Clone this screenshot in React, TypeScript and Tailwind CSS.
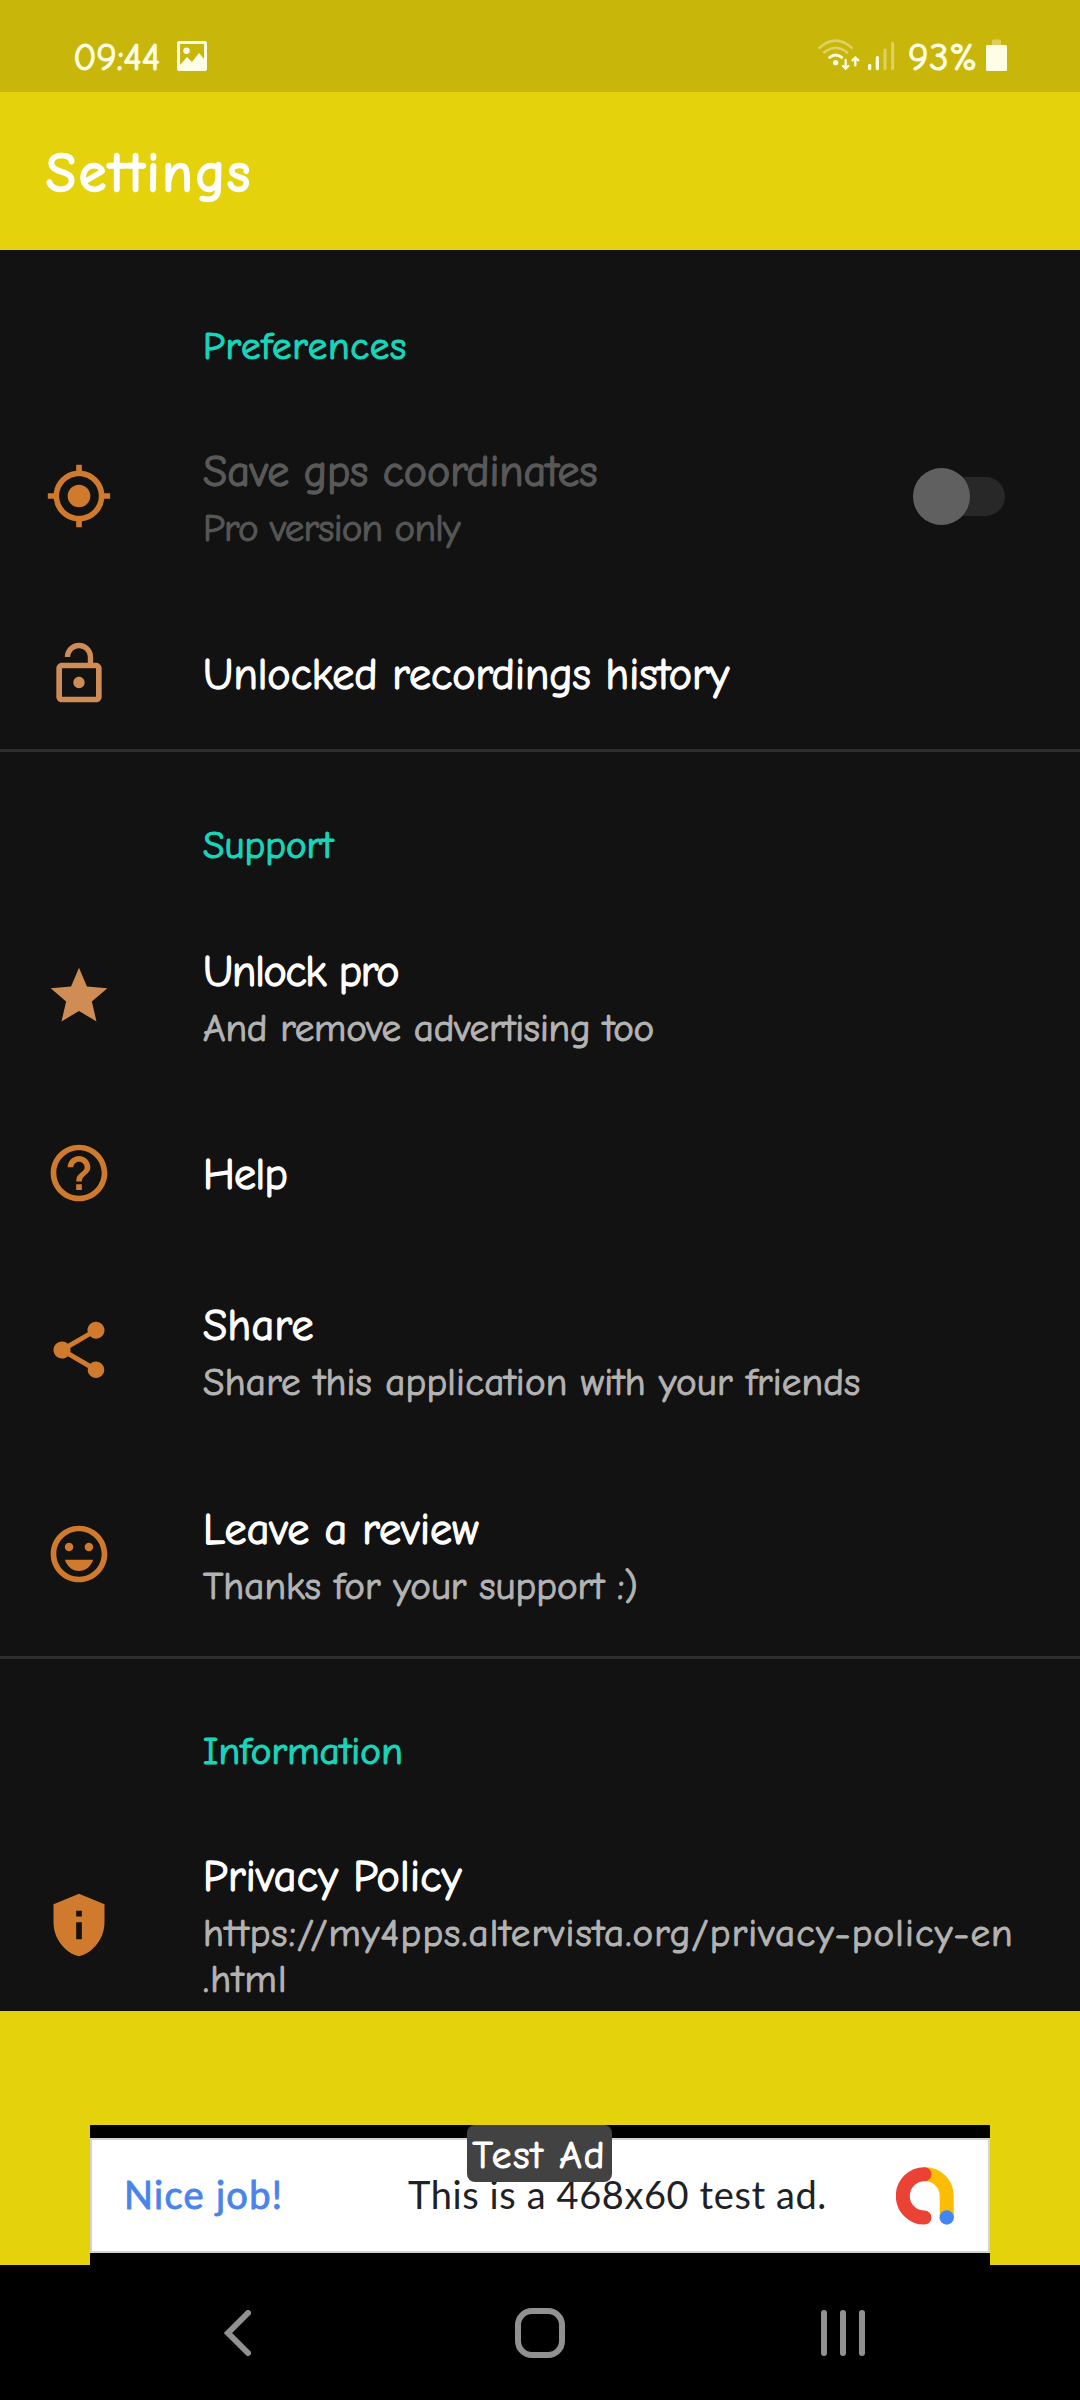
import type { ReactNode } from "react";

const ORANGE = "text-[#d07a2d]";
const TAN = "text-[#cf8d55]";

function Icon({ className, children }: { className: string; children: ReactNode }) {
  return (
    <svg viewBox="0 0 24 24" fill="currentColor" className={`size-[68px] shrink-0 ${className}`}>
      {children}
    </svg>
  );
}

function Header({ children, className }: { children: ReactNode; className: string }) {
  return (
    <h2
      className={`flex shrink-0 items-center pl-[203px] text-[39px] leading-[46px] text-[#17d5bb] [-webkit-text-stroke:1.2px_#17d5bb] ${className}`}
    >
      {children}
    </h2>
  );
}

function Title({ children, className = "text-white" }: { children: ReactNode; className?: string }) {
  return (
    <div className={`text-[44px] leading-[56px] whitespace-nowrap [-webkit-text-stroke:1.3px_currentColor] ${className}`}>
      {children}
    </div>
  );
}

function Summary({ children, className = "text-[#b3b3b3]" }: { children: ReactNode; className?: string }) {
  return (
    <div className={`mt-[6px] text-[39px] leading-[46px] whitespace-nowrap [-webkit-text-stroke:1px_currentColor] ${className}`}>
      {children}
    </div>
  );
}

function Row({ icon, children, className, end }: { icon: ReactNode; children: ReactNode; className: string; end?: ReactNode }) {
  return (
    <div className={`flex shrink-0 items-center pr-[76px] pl-[45px] ${className}`}>
      {icon}
      <div className="ml-[90px] flex-1 pt-[3px]">{children}</div>
      {end}
    </div>
  );
}

function Divider() {
  return <div className="h-[3px] shrink-0 bg-[#2e2e2e]" />;
}

function Toggle() {
  return (
    <div className="mr-[-1px] flex h-[58px] w-[92px] items-center">
      <div className="z-10 size-[57px] shrink-0 rounded-full bg-[#606060]" />
      <div className="-ml-[50px] h-[39px] w-[85px] rounded-full bg-[#282828]" />
    </div>
  );
}

function StatusBar() {
  return (
    <div className="flex h-[92px] shrink-0 items-start bg-[#c9b60a] text-[#fffde6]">
      <span className="mt-[35px] ml-[73px] w-[104px] text-[39px] leading-[46px] tracking-[-0.4px] [-webkit-text-stroke:1px_#fffde6]">
        09:44
      </span>
      <svg viewBox="0 0 30 30" className="mt-[41px] size-[30px]" fill="currentColor">
        <path
          fillRule="evenodd"
          d="M2 0h26q2 0 2 2v26q0 2-2 2H2q-2 0-2-2V2Q0 0 2 0ZM3 3v21l7-8 5 5 7-9 5 6V3ZM9.5 6.500a3.200 3.200 0 1 1 0 6.400 3.200 3.200 0 0 1 0-6.400Z"
        />
      </svg>
      <svg viewBox="170 111 240 105" className="mt-[37px] ml-[610px] h-[35px] w-[80px]" fill="none" strokeLinecap="round">
        <g stroke="#dfd162" strokeWidth="8">
          <path d="M178 143Q226 101 274 143M192 157Q226 130 260 157" />
          <path d="M374 150V206M397 130V206" strokeWidth="9" />
        </g>
        <g stroke="#fffde6" strokeWidth="9">
          <path d="M208 172Q226 158 244 172" />
          <path d="M328 196V206M351 173V206" strokeWidth="10" />
          <path d="M256 180V204M248 198L256 206L264 198M285 196V174M276 181L285 173L294 181" strokeWidth="7" />
        </g>
        <circle cx="226" cy="188" r="8" fill="#fffde6" />
      </svg>
      <span className="mt-[35px] ml-[11px] w-[78px] text-[39px] leading-[46px] tracking-[0.4px] [-webkit-text-stroke:1px_#fffde6]">93%</span>
      <svg viewBox="0 0 21 32" className="mt-[39px] h-[32px] w-[21px]">
        <path d="M6 6V2q0-1.500 1.500-1.500h6Q15 .5 15 2v4Z" fill="#dccf5c" />
        <rect y="6" width="21" height="26" rx="1.500" fill="#fffde6" />
      </svg>
    </div>
  );
}

function AdBanner() {
  return (
    <div className="flex h-[254px] shrink-0 flex-col items-center justify-end bg-[#e4d20c]">
      <div className="relative h-[140px] w-[900px] bg-black pt-[13px]">
        <div className="flex h-[115px] items-center border-2 border-[#d3d3d3] bg-white pl-[32px] font-[Lato] text-[38px] leading-[46px] whitespace-nowrap">
          <span className="w-[284px] pb-[3px] tracking-[1.3px] text-[#4a84ea] [-webkit-text-stroke:0.9px_#4a84ea]">Nice job!</span>
          <span className="w-[488px] pb-[3px] tracking-[0.6px] text-[#202124]">This is a 468x60 test ad.</span>
          <svg viewBox="0 0 58 58" className="size-[58px]" fill="none" strokeLinecap="round" strokeWidth="14">
            <path d="M29 7.200A21.600 21.600 0 0 1 50.700 29V48" stroke="#fbbc04" />
            <path d="M28.500 7.200A21.700 21.700 0 0 0 28.500 50.600" stroke="#ea4335" />
            <circle cx="50.700" cy="50.500" r="7.200" fill="#4285f4" />
          </svg>
        </div>
        <div className="absolute top-0 left-[377px] h-[57px] w-[145px] rounded-[8px] bg-[#424242] pt-[8px] text-center text-[39px] leading-[46px] tracking-[1.9px] whitespace-nowrap text-white [-webkit-text-stroke:1.2px_#fff]">
          Test Ad
        </div>
      </div>
    </div>
  );
}

function NavBar() {
  return (
    <div className="flex h-[135px] shrink-0 items-center bg-black text-[#919191]">
      <svg viewBox="0 0 28 46" className="ml-[223px] h-[46px] w-[28px]" fill="none" stroke="currentColor" strokeWidth="6" strokeLinecap="round">
        <path d="M25 3L5 23L25 43" />
      </svg>
      <div className="ml-[264px] size-[50px] rounded-[17px] border-[6px] border-[#919191]" />
      <div className="ml-[256px] flex gap-[13px]">
        <div className="h-[46px] w-[6px] rounded-full bg-[#919191]" />
        <div className="h-[46px] w-[6px] rounded-full bg-[#919191]" />
        <div className="h-[46px] w-[6px] rounded-full bg-[#919191]" />
      </div>
    </div>
  );
}

export default function App() {
  return (
    <div className="flex h-[2400px] w-[1080px] flex-col overflow-hidden bg-[#121212] font-['Comic_Neue','Comic_Sans_MS',cursive] [font-variant-ligatures:none]">
      <StatusBar />
      <header className="flex h-[158px] shrink-0 items-center bg-[#e4d20c] pt-[6px] pl-[46px] text-[54px] leading-[64px] font-medium tracking-[3.3px] text-white [-webkit-text-stroke:2.4px_#fff]">
        Settings
      </header>

      <main className="flex h-[1761px] shrink-0 flex-col overflow-hidden">
        <Header className="h-[144px] pt-[50px] tracking-[0.7px]">Preferences</Header>
        <Row
          className="h-[204px]"
          icon={
            <Icon className={ORANGE}>
              <path d="M12 8c-2.210 0-4 1.790-4 4s1.790 4 4 4 4-1.790 4-4-1.790-4-4-4zm8.940 3A8.994 8.994 0 0 0 13 3.060V1h-2v2.060A8.994 8.994 0 0 0 3.060 11H1v2h2.060A8.994 8.994 0 0 0 11 20.940V23h2v-2.060A8.994 8.994 0 0 0 20.940 13H23v-2h-2.060zM12 19c-3.870 0-7-3.130-7-7s3.130-7 7-7 7 3.130 7 7-3.130 7-7 7z" />
            </Icon>
          }
          end={<Toggle />}
        >
          <Title className="tracking-[-0.1px] text-[#595959]">Save gps coordinates</Title>
          <Summary className="tracking-[-0.8px] text-[#565656]">Pro version only</Summary>
        </Row>
        <Row
          className="h-[151px]"
          icon={
            <Icon className={TAN}>
              <path d="M12 17c1.100 0 2-.9 2-2s-.9-2-2-2-2 .9-2 2 .9 2 2 2zm6-9h-1V6c0-2.760-2.240-5-5-5S7 3.240 7 6h1.900c0-1.710 1.390-3.100 3.100-3.100s3.100 1.390 3.100 3.100v2H6c-1.100 0-2 .9-2 2v10c0 1.100.9 2 2 2h12c1.100 0 2-.9 2-2V10c0-1.100-.9-2-2-2zm0 12H6V10h12v10z" />
            </Icon>
          }
        >
          <Title>Unlocked recordings history</Title>
        </Row>
        <Divider />

        <Header className="h-[142px] pt-[46px]">Support</Header>
        <Row
          className="h-[204px]"
          icon={
            <Icon className={TAN}>
              <path d="M12 17.270 18.180 21l-1.640-7.030L22 9.240l-7.190-.61L12 2 9.190 8.630 2 9.240l5.460 4.730L5.820 21z" />
            </Icon>
          }
        >
          <Title className="tracking-[-1.3px] text-white">Unlock pro</Title>
          <Summary className="tracking-[-0.18px] text-[#b3b3b3]">And remove advertising too</Summary>
        </Row>
        <Row
          className="h-[150px]"
          icon={
            <Icon className={ORANGE}>
              <path d="M11 18h2v-2h-2v2zm1-16C6.480 2 2 6.480 2 12s4.480 10 10 10 10-4.480 10-10S17.520 2 12 2zm0 18c-4.410 0-8-3.590-8-8s3.590-8 8-8 8 3.590 8 8-3.590 8-8 8zm0-14c-2.210 0-4 1.790-4 4h2c0-1.100.9-2 2-2s2 .9 2 2c0 2-3 1.750-3 5h2c0-2.250 3-2.500 3-5 0-2.210-1.790-4-4-4z" />
            </Icon>
          }
        >
          <Title className="tracking-[-0.7px] text-white">Help</Title>
        </Row>
        <Row
          className="h-[204px]"
          icon={
            <Icon className={ORANGE}>
              <path d="M18 16.080c-.76 0-1.440.3-1.960.77L8.910 12.700c.05-.23.09-.46.09-.7s-.04-.47-.09-.7l7.050-4.110c.54.5 1.250.81 2.040.81 1.660 0 3-1.340 3-3s-1.340-3-3-3-3 1.340-3 3c0 .24.04.47.09.7L8.040 9.810C7.500 9.310 6.790 9 6 9c-1.660 0-3 1.340-3 3s1.340 3 3 3c.79 0 1.500-.31 2.040-.81l7.120 4.160c-.05.21-.08.43-.08.65 0 1.610 1.310 2.920 2.920 2.920s2.920-1.310 2.920-2.920-1.310-2.920-2.920-2.920z" />
            </Icon>
          }
        >
          <Title className="tracking-[0.3px] text-white">Share</Title>
          <Summary className="tracking-[0.2px] text-[#b3b3b3]">Share this application with your friends</Summary>
        </Row>
        <Row
          className="h-[204px]"
          icon={
            <Icon className={ORANGE}>
              <path d="M12 2C6.480 2 2 6.480 2 12s4.480 10 10 10 10-4.480 10-10S17.520 2 12 2zm0 18c-4.410 0-8-3.590-8-8s3.590-8 8-8 8 3.590 8 8-3.590 8-8 8zm0-2c2.280 0 4.220-1.660 5-4H7c.78 2.340 2.720 4 5 4z" />
              <circle cx="8.500" cy="9.500" r="1.500" />
              <circle cx="15.500" cy="9.500" r="1.500" />
            </Icon>
          }
        >
          <Title className="tracking-[0.2px] text-white">Leave a review</Title>
          <Summary>Thanks for your support :)</Summary>
        </Row>
        <Divider />

        <Header className="h-[141px] pt-[45px] tracking-[0.2px]">Information</Header>
        <Row
          className="h-[249px]"
          icon={
            <Icon className={ORANGE}>
              <path
                fillRule="evenodd"
                d="M12 1 3 4.700V11c0 5.550 3.840 10.740 9 12 5.160-1.260 9-6.450 9-12V4.700L12 1zM11 7h2v2h-2V7zM11 11h2v6h-2v-6z"
              />
            </Icon>
          }
        >
          <Title className="tracking-[0.3px] text-white">Privacy Policy</Title>
          <Summary className="tracking-[1.16px] text-[#b3b3b3]">
            https://my4pps.altervista.org/privacy-policy-en
            <br />
            .html
          </Summary>
        </Row>
      </main>

      <AdBanner />
      <NavBar />
    </div>
  );
}
